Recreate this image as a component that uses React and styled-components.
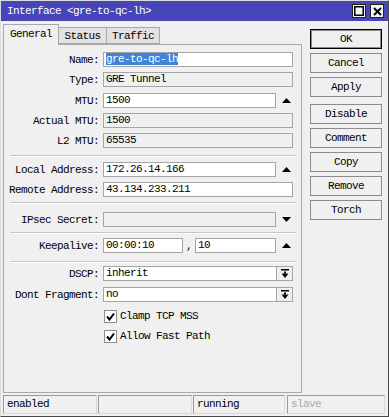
import React from 'react';
import styled, { createGlobalStyle } from 'styled-components';

const GlobalStyle = createGlobalStyle`
  * { box-sizing: border-box; }
  html, body { margin: 0; padding: 0; background: #f0f0f0; }
  body {
    font-family: "Liberation Mono", "DejaVu Sans Mono", monospace;
    font-size: 11px;
    letter-spacing: -0.6px;
    color: #000;
  }
`;

const Window = styled.div`
  width: 389px;
  height: 417px;
  display: flex;
  flex-direction: column;
  background: #f0f0f0;
  border: 1px solid;
  border-color: #dcdcdc #4a4a4a #4a4a4a #dcdcdc;
`;

const TitleBar = styled.div`
  height: 20px;
  flex: none;
  display: flex;
  align-items: center;
  padding-left: 6px;
  background: #4646b9;
  color: #fff;
`;

const TitleButtons = styled.div`
  margin-left: auto;
  margin-right: 4px;
  display: flex;
  gap: 4px;
`;

const TitleButton = styled.div`
  width: 14px;
  height: 14px;
  background: #f4f4f4;
  border: 1px solid #202020;
  display: flex;
  align-items: center;
  justify-content: center;
`;

const Main = styled.div`
  flex: 1;
  display: flex;
  padding: 3px 0 0 2px;
  min-height: 0;
`;

const Left = styled.div`
  width: 299px;
  display: flex;
  flex-direction: column;
`;

const TabRow = styled.div`
  display: flex;
  align-items: flex-end;
  height: 20px;
  position: relative;
  z-index: 1;
`;

const Tab = styled.div`
  width: ${p => p.$w}px;
  height: ${p => (p.$active ? 21 : 17)}px;
  margin-bottom: ${p => (p.$active ? -1 : 0)}px;
  background: ${p => (p.$active ? '#f0f0f0' : '#e2e2e2')};
  border: 1px solid #a8a8a8;
  border-bottom: ${p => (p.$active ? 'none' : '1px solid #a8a8a8')};
  border-left: ${p => (p.$first || p.$active ? '1px solid #a8a8a8' : 'none')};
  display: flex;
  align-items: center;
  justify-content: center;
  padding-bottom: ${p => (p.$active ? 3 : 0)}px;
`;

const Panel = styled.div`
  flex: 1;
  border: 1px solid #a8a8a8;
  background: #f0f0f0;
  display: flex;
  flex-direction: column;
`;

const Row = styled.div`
  display: flex;
  align-items: center;
  height: 15px;
  margin-top: ${p => p.$mt || 0}px;
`;

const Label = styled.div`
  width: 95px;
  flex: none;
  margin-right: 4px;
  text-align: right;
  white-space: nowrap;
`;

const Field = styled.div`
  width: 190px;
  height: 15px;
  display: flex;
  align-items: center;
`;

const Input = styled.div`
  height: 15px;
  width: ${p => (p.$w ? `${p.$w}px` : 'auto')};
  flex: ${p => (p.$w ? 'none' : '1')};
  border: 1px solid #a5a5a5;
  background: ${p => (p.$ro ? '#f0f0f0' : '#fff')};
  padding: 0 2px;
  line-height: 13px;
  white-space: nowrap;
  overflow: hidden;
`;

const Selected = styled.span`
  background: #3d85d8;
  color: #fff;
`;

const ArrowSlot = styled.div`
  width: 17px;
  flex: none;
  display: flex;
  justify-content: flex-end;
  padding-right: 2px;
`;

const Comma = styled.div`
  width: 12px;
  flex: none;
  text-align: center;
  align-self: flex-end;
  line-height: 13px;
`;

const DropButton = styled.div`
  width: 16px;
  height: 15px;
  flex: none;
  border: 1px solid #a5a5a5;
  border-left: none;
  background: #f0f0f0;
  display: flex;
  align-items: center;
  justify-content: center;
`;

const Separator = styled.div`
  height: 2px;
  margin: ${p => p.$mt}px 5px 0 6px;
  border-top: 1px solid #c6c6c6;
  border-bottom: 1px solid #fff;
`;

const CheckRow = styled.div`
  display: flex;
  align-items: center;
  height: 14px;
  margin-top: ${p => p.$mt}px;
  padding-left: 100px;
  gap: 3px;
`;

const CheckBox = styled.div`
  width: 13px;
  height: 13px;
  border: 1px solid #8e8e8e;
  background: #fff;
  display: flex;
  align-items: center;
  justify-content: center;
`;

const ButtonColumn = styled.div`
  width: 72px;
  margin-left: 8px;
  margin-top: 5px;
  display: flex;
  flex-direction: column;
`;

const Button = styled.div`
  height: 20px;
  margin-bottom: 4px;
  margin-top: ${p => p.$mt || 0}px;
  border: 1px solid ${p => (p.$default ? '#000' : '#8c8c8c')};
  box-shadow: ${p => (p.$default ? 'inset 0 0 0 1px #8c8c8c' : 'none')};
  background: #f0f0f0;
  display: flex;
  align-items: center;
  justify-content: center;
`;

const StatusBar = styled.div`
  height: 19px;
  flex: none;
  margin: 2px 3px 2px 2px;
  display: grid;
  grid-template-columns: 94px 94px 92px 1fr;
  column-gap: 1px;
`;

const StatusCell = styled.div`
  border: 1px solid;
  border-color: #9a9a9a #dadada #dadada #9a9a9a;
  padding-left: 3px;
  line-height: 17px;
  color: ${p => (p.$dim ? '#a8a8a8' : '#000')};
  margin-left: ${p => p.$ml || 0}px;
`;

const Up = () => (
  <svg width="9" height="5" viewBox="0 0 9 5"><polygon points="0,5 9,5 4.5,0" fill="#000" /></svg>
);

const Down = () => (
  <svg width="9" height="5" viewBox="0 0 9 5"><polygon points="0,0 9,0 4.5,5" fill="#000" /></svg>
);

const DropIcon = () => (
  <svg width="8" height="9" viewBox="0 0 8 9">
    <rect x="0" y="0" width="8" height="1.5" fill="#000" />
    <rect x="3" y="2.5" width="2" height="2" fill="#000" />
    <polygon points="0.5,4.5 7.5,4.5 4,9" fill="#000" />
  </svg>
);

const Check = () => (
  <svg width="9" height="9" viewBox="0 0 9 9">
    <polyline points="1,4.5 3.5,7.5 8,1.5" fill="none" stroke="#000" strokeWidth="2" />
  </svg>
);

const TextRow = ({ label, value, ro, mt, arrow, children }) => (
  <Row $mt={mt}>
    <Label>{label}</Label>
    <Field>
      {children || <Input $ro={ro}>{value}</Input>}
      {arrow && <ArrowSlot>{arrow}</ArrowSlot>}
    </Field>
  </Row>
);

const SelectRow = ({ label, value, mt }) => (
  <Row $mt={mt}>
    <Label>{label}</Label>
    <Field>
      <Input>{value}</Input>
      <DropButton><DropIcon /></DropButton>
    </Field>
  </Row>
);

export default function App() {
  return (
    <>
      <GlobalStyle />
      <Window>
        <TitleBar>
          Interface &lt;gre-to-qc-lh&gt;
          <TitleButtons>
            <TitleButton>
              <svg width="10" height="10" viewBox="0 0 10 10">
                <rect x="0.75" y="0.75" width="8.5" height="8.5" fill="none" stroke="#000" strokeWidth="1.5" />
              </svg>
            </TitleButton>
            <TitleButton>
              <svg width="9" height="9" viewBox="0 0 9 9">
                <path d="M1 1 L8 8 M8 1 L1 8" stroke="#000" strokeWidth="2" />
              </svg>
            </TitleButton>
          </TitleButtons>
        </TitleBar>
        <Main>
          <Left>
            <TabRow>
              <Tab $active $first $w={56}>General</Tab>
              <Tab $w={48}>Status</Tab>
              <Tab $w={53}>Traffic</Tab>
            </TabRow>
            <Panel>
              <TextRow label="Name:" mt={7}>
                <Input><Selected>gre-to-qc-lh</Selected></Input>
              </TextRow>
              <TextRow label="Type:" value="GRE Tunnel" ro mt={5} />
              <TextRow label="MTU:" value="1500" mt={6} arrow={<Up />} />
              <TextRow label="Actual MTU:" value="1500" ro mt={5} />
              <TextRow label="L2 MTU:" value="65535" ro mt={5} />
              <Separator $mt={7} />
              <TextRow label="Local Address:" value="172.26.14.166" mt={5} arrow={<Up />} />
              <TextRow label="Remote Address:" value="43.134.233.211" mt={5} />
              <Separator $mt={5} />
              <TextRow label="IPsec Secret:" value="" ro mt={8} arrow={<Down />} />
              <Separator $mt={5} />
              <TextRow label="Keepalive:" mt={4} arrow={<Up />}>
                <Input $w={80}>00:00:10</Input>
                <Comma>,</Comma>
                <Input>10</Input>
              </TextRow>
              <Separator $mt={8} />
              <SelectRow label="DSCP:" value="inherit" mt={3} />
              <SelectRow label="Dont Fragment:" value="no" mt={6} />
              <CheckRow $mt={7}>
                <CheckBox><Check /></CheckBox>
                Clamp TCP MSS
              </CheckRow>
              <CheckRow $mt={6}>
                <CheckBox><Check /></CheckBox>
                Allow Fast Path
              </CheckRow>
            </Panel>
          </Left>
          <ButtonColumn>
            <Button $default>OK</Button>
            <Button>Cancel</Button>
            <Button>Apply</Button>
            <Button $mt={3}>Disable</Button>
            <Button>Comment</Button>
            <Button>Copy</Button>
            <Button>Remove</Button>
            <Button>Torch</Button>
          </ButtonColumn>
        </Main>
        <StatusBar>
          <StatusCell>enabled</StatusCell>
          <StatusCell />
          <StatusCell>running</StatusCell>
          <StatusCell $dim $ml={1}>slave</StatusCell>
        </StatusBar>
      </Window>
    </>
  );
}
